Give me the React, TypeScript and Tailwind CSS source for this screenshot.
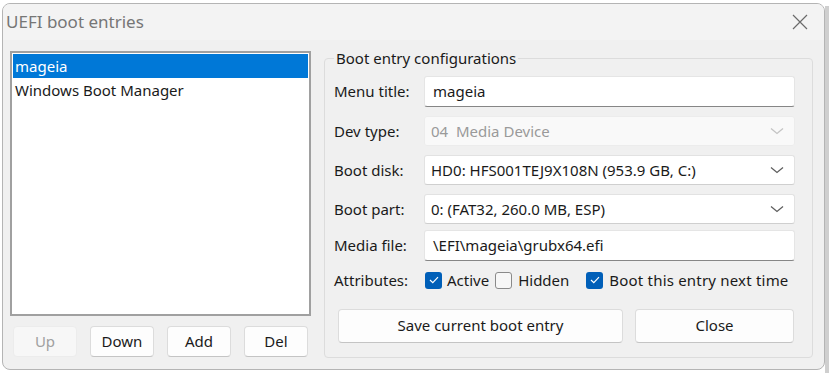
import React from "react";

const font = { fontFamily: '"Noto Sans", "Segoe UI", sans-serif' };

function Chevron({ disabled }: { disabled?: boolean }) {
  return (
    <svg width="14" height="8" viewBox="0 0 14 8" className="shrink-0">
      <path
        d="M1 1.5 L7 6.5 L13 1.5"
        fill="none"
        stroke={disabled ? "#c4c4c4" : "#5f5f5f"}
        strokeWidth="1.3"
      />
    </svg>
  );
}

function Check({ checked }: { checked: boolean }) {
  if (!checked) {
    return (
      <span className="block h-[17px] w-[17px] shrink-0 rounded-[3px] border border-[#8a8a8a] bg-[#f7f7f7]" />
    );
  }
  return (
    <span className="flex h-[17px] w-[17px] shrink-0 items-center justify-center rounded-[3px] bg-[#005fb8]">
      <svg width="10" height="8" viewBox="0 0 10 8">
        <path d="M1 4 L3.8 6.6 L9 1.2" fill="none" stroke="white" strokeWidth="1.2" />
      </svg>
    </span>
  );
}

function TextBox({ value }: { value: string }) {
  return (
    <div className="flex h-[31px] w-[371px] items-center rounded-[3px] border border-[#e5e5e5] border-b-[#868686] bg-white pl-2 text-[15px] text-[#1a1a1a]">
      {value}
    </div>
  );
}

function Combo({ value, disabled }: { value: string; disabled?: boolean }) {
  return (
    <div
      className={
        disabled
          ? "flex h-[30px] w-[371px] items-center justify-between rounded-[3px] border border-[#ececec] bg-[#f9f9f9] pl-[6px] pr-[10px] text-[15px] text-[#9a9a9a]"
          : "flex h-[30px] w-[371px] items-center justify-between rounded-[3px] border border-[#e2e2e2] border-b-[#cfcfcf] bg-white pl-[6px] pr-[10px] text-[15px] text-[#1a1a1a]"
      }
    >
      <span className="whitespace-pre">{value}</span>
      <Chevron disabled={disabled} />
    </div>
  );
}

function Row({ label, children }: { label: string; children: React.ReactNode }) {
  return (
    <div className="flex items-center">
      <span className="w-[90px] text-[15px] text-[#1a1a1a]">{label}</span>
      {children}
    </div>
  );
}

function SmallButton({ label, disabled }: { label: string; disabled?: boolean }) {
  return (
    <button
      type="button"
      className={
        disabled
          ? "h-[31px] w-[64px] rounded-[4px] border border-[#ececec] bg-[#f7f7f7] text-[15px] text-[#a0a0a0]"
          : "h-[31px] w-[64px] rounded-[4px] border border-[#dcdcdc] border-b-[#c4c4c4] bg-[#fdfdfd] text-[15px] text-[#1a1a1a]"
      }
    >
      {label}
    </button>
  );
}

export default function App() {
  return (
    <div className="relative h-[373px] w-[829px] overflow-hidden bg-white" style={font}>
      <div className="absolute right-0 top-[6px] h-[367px] w-[4px] bg-[#cfcfcf]" />
      <div className="ml-[2px] mt-[3px] flex h-[367px] w-[823px] flex-col overflow-hidden rounded-lg border border-[#b4b4b4] bg-[#f0f0f0]">
        <div className="flex h-[36px] shrink-0 items-center justify-between bg-[#f3f3f3] pl-[3px] pr-[16px]">
          <span className="text-[17px] text-[#767676]">UEFI boot entries</span>
          <svg width="16" height="16" viewBox="0 0 16 16">
            <path d="M1 1 L15 15 M15 1 L1 15" stroke="#6a6a6a" strokeWidth="1.2" />
          </svg>
        </div>

        <div className="flex flex-1 pl-[7px] pt-[11px]">
          <div className="flex w-[301px] flex-col">
            <div className="h-[265px] border-2 border-[#a0a0a0] bg-white p-[1px] text-[15px] leading-[24px]">
              <div className="bg-[#0078d7] pl-[2px] text-white">mageia</div>
              <div className="pl-[2px] text-[#1a1a1a]">Windows Boot Manager</div>
            </div>
            <div className="mt-[10px] flex gap-[13px] pl-[3px]">
              <SmallButton label="Up" disabled />
              <SmallButton label="Down" />
              <SmallButton label="Add" />
              <SmallButton label="Del" />
            </div>
          </div>

          <fieldset className="ml-[13px] mt-[-3px] h-[310px] w-[489px] rounded-[4px] border border-[#dcdcdc] pl-[9px]">
            <legend className="px-[2px] text-[15px] leading-[20px] text-[#1a1a1a]">
              Boot entry configurations
            </legend>
            <div className="mt-[8px] flex flex-col gap-[9px]">
              <Row label="Menu title:">
                <TextBox value="mageia" />
              </Row>
              <Row label="Dev type:">
                <Combo value="04  Media Device" disabled />
              </Row>
              <Row label="Boot disk:">
                <Combo value="HD0: HFS001TEJ9X108N (953.9 GB, C:)" />
              </Row>
              <Row label="Boot part:">
                <Combo value="0: (FAT32, 260.0 MB, ESP)" />
              </Row>
            </div>
            <div className="mt-[6px]">
              <Row label="Media file:">
                <TextBox value="\EFI\mageia\grubx64.efi" />
              </Row>
            </div>
            <div className="mt-[8px] flex items-center text-[15px] text-[#1a1a1a]">
              <span className="w-[91px]">Attributes:</span>
              <Check checked />
              <span className="ml-[5px]">Active</span>
              <span className="ml-[6px]"><Check checked={false} /></span>
              <span className="ml-[6px]">Hidden</span>
              <span className="ml-[17px]"><Check checked /></span>
              <span className="ml-[6px] tracking-[0.2px]">Boot this entry next time</span>
            </div>
            <div className="mt-[17px] flex gap-[12px] pl-[4px]">
              <button
                type="button"
                className="h-[34px] w-[285px] rounded-[4px] border border-[#dcdcdc] border-b-[#c4c4c4] bg-[#fdfdfd] text-[15px] text-[#1a1a1a]"
              >
                Save current boot entry
              </button>
              <button
                type="button"
                className="h-[34px] w-[159px] rounded-[4px] border border-[#dcdcdc] border-b-[#c4c4c4] bg-[#fdfdfd] text-[15px] text-[#1a1a1a]"
              >
                Close
              </button>
            </div>
          </fieldset>
        </div>
      </div>
    </div>
  );
}
